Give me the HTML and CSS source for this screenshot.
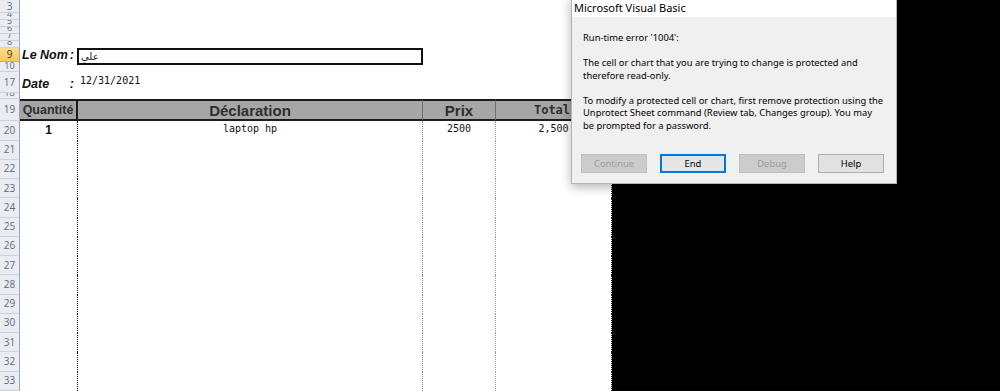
FILE: index.html
```html
<!DOCTYPE html>
<html lang="fr">
<head>
<meta charset="UTF-8">
<meta name="viewport" content="width=device-width, initial-scale=1.0">
<title>Facture - Feuil1</title>
<link rel="stylesheet" href="styles.css">
</head>
<body>
<div class="screen">
    <div class="sheet">
        <div class="row r3"><div class="rh">3</div></div>
        <div class="row r-tiny"><div class="rh">4</div></div>
        <div class="row r-tiny"><div class="rh">5</div></div>
        <div class="row r-tiny"><div class="rh">6</div></div>
        <div class="row r-tiny"><div class="rh">7</div></div>
        <div class="row r-tiny"><div class="rh">8</div></div>

        <div class="row r-nom">
            <div class="rh sel">9</div>
            <div class="cell c-a label"><span>Le Nom</span><span>:</span></div>
            <div class="cell c-b"><div class="name-box">علي</div></div>
        </div>
        <div class="row r10"><div class="rh">10</div></div>

        <div class="row r-date">
            <div class="rh">17</div>
            <div class="cell c-a label"><span>Date</span><span>:</span></div>
            <div class="cell c-b date">12/31/2021</div>
        </div>
        <div class="row r18"><div class="rh">18</div></div>

        <div class="row head">
            <div class="rh">19</div>
            <div class="cell c-a">Quantité</div>
            <div class="cell c-b">Déclaration</div>
            <div class="cell c-c">Prix</div>
            <div class="cell c-d total">Total</div>
        </div>

        <div class="row item first">
            <div class="rh">20</div>
            <div class="cell c-a qty">1</div>
            <div class="cell c-b mono">laptop hp</div>
            <div class="cell c-c mono">2500</div>
            <div class="cell c-d mono">2,500</div>
        </div>
        <div class="row item"><div class="rh">21</div><div class="cell c-a"></div><div class="cell c-b"></div><div class="cell c-c"></div><div class="cell c-d"></div></div>
        <div class="row item"><div class="rh">22</div><div class="cell c-a"></div><div class="cell c-b"></div><div class="cell c-c"></div><div class="cell c-d"></div></div>
        <div class="row item"><div class="rh">23</div><div class="cell c-a"></div><div class="cell c-b"></div><div class="cell c-c"></div><div class="cell c-d"></div></div>
        <div class="row item"><div class="rh">24</div><div class="cell c-a"></div><div class="cell c-b"></div><div class="cell c-c"></div><div class="cell c-d"></div></div>
        <div class="row item"><div class="rh">25</div><div class="cell c-a"></div><div class="cell c-b"></div><div class="cell c-c"></div><div class="cell c-d"></div></div>
        <div class="row item"><div class="rh">26</div><div class="cell c-a"></div><div class="cell c-b"></div><div class="cell c-c"></div><div class="cell c-d"></div></div>
        <div class="row item"><div class="rh">27</div><div class="cell c-a"></div><div class="cell c-b"></div><div class="cell c-c"></div><div class="cell c-d"></div></div>
        <div class="row item"><div class="rh">28</div><div class="cell c-a"></div><div class="cell c-b"></div><div class="cell c-c"></div><div class="cell c-d"></div></div>
        <div class="row item"><div class="rh">29</div><div class="cell c-a"></div><div class="cell c-b"></div><div class="cell c-c"></div><div class="cell c-d"></div></div>
        <div class="row item"><div class="rh">30</div><div class="cell c-a"></div><div class="cell c-b"></div><div class="cell c-c"></div><div class="cell c-d"></div></div>
        <div class="row item"><div class="rh">31</div><div class="cell c-a"></div><div class="cell c-b"></div><div class="cell c-c"></div><div class="cell c-d"></div></div>
        <div class="row item"><div class="rh">32</div><div class="cell c-a"></div><div class="cell c-b"></div><div class="cell c-c"></div><div class="cell c-d"></div></div>
        <div class="row item"><div class="rh">33</div><div class="cell c-a"></div><div class="cell c-b"></div><div class="cell c-c"></div><div class="cell c-d"></div></div>
    </div>
    <div class="void"></div>

    <div class="vb-dialog">
        <div class="vb-title">Microsoft Visual Basic</div>
        <div class="vb-body">
            <p>Run-time error '1004':</p>
            <p>The cell or chart that you are trying to change is protected and<br>therefore read-only.</p>
            <p>To modify a protected cell or chart, first remove protection using the<br>Unprotect Sheet command (Review tab, Changes group). You may<br>be prompted for a password.</p>
            <div class="vb-buttons">
                <button class="vb-btn" disabled>Continue</button>
                <button class="vb-btn default">End</button>
                <button class="vb-btn" disabled>Debug</button>
                <button class="vb-btn">Help</button>
            </div>
        </div>
    </div>
</div>
</body>
</html>
```

FILE: styles.css
```css
:root{
    --rh-bg:#e9edf1;
    --rh-line:#cdd2d9;
    --rh-text:#5f6b78;
    --head-bg:#a6a6a6;
    --dlg-bg:#f0f0f0;
}
body{
    margin:0;
    background:#fff;
    font-family:"Liberation Sans", Arial, sans-serif;
}
.screen{
    position:relative;
    display:flex;
    width:1000px;
    height:391px;
    overflow:hidden;
}
.sheet{
    display:flex;
    flex-direction:column;
    width:612px;
    flex:none;
}
.void{
    flex:1;
    background:#000;
}

/* rows */
.row{
    display:flex;
    flex:none;
    box-sizing:border-box;
}
.r3{height:13px;}
.r-tiny{height:7px;}
.r-nom{height:14px;}
.r10{height:10px;}
.r-date{height:21px;}
.r18{height:6px;}
.head{height:22px;}
.item{height:19.25px;}
.item.first{height:19.5px;}

.rh{
    width:20px;
    flex:none;
    box-sizing:border-box;
    display:flex;
    align-items:center;
    justify-content:center;
    overflow:hidden;
    background:var(--rh-bg);
    border-right:1px solid #9da6b0;
    border-bottom:1px solid var(--rh-line);
    color:var(--rh-text);
    font-family:"Open Sans", sans-serif;
    font-size:10px;
    line-height:11px;
}
.r-tiny .rh,
.r10 .rh,
.r18 .rh{
    align-items:flex-end;
    font-size:9px;
}
.rh.sel{
    background:linear-gradient(#f9dd8c,#f4c85e);
    border-bottom-color:#d7ab4c;
    color:#3a3a3a;
}

/* cells */
.cell{
    box-sizing:border-box;
    flex:none;
    display:flex;
    align-items:center;
    justify-content:center;
}
.c-a{width:58px;}
.c-b{width:345px;}
.c-c{width:73px;}
.c-d{width:116px;}

.label{
    justify-content:space-between;
    padding:0 4px 0 2px;
    font-weight:bold;
    font-style:italic;
    font-size:12.5px;
    color:#111;
}
.r-date .label{
    padding-top:2px;
}
.r-nom .c-b{
    align-items:flex-start;
    justify-content:flex-start;
}
.name-box{
    box-sizing:border-box;
    flex:none;
    width:346px;
    height:17px;
    margin-left:-1px;
    border:2px solid #111;
    padding:0 2px;
    font-family:"DejaVu Sans", sans-serif;
    font-size:10px;
    line-height:13px;
    color:#222;
}
.date{
    justify-content:flex-start;
    align-items:flex-start;
    padding:3px 0 0 2px;
    font-family:"DejaVu Sans Mono", monospace;
    font-size:10px;
    color:#111;
}

/* table header */
.head .cell{
    background:var(--head-bg);
    border-top:2px solid #1c1c1c;
    border-bottom:2px solid #1c1c1c;
    border-right:1px solid #6f6f6f;
    font-weight:bold;
    font-size:15px;
    color:#2e2e2e;
}
.head .c-a{
    border-right:2px solid #1c1c1c;
    font-size:12.5px;
}
.head .c-d{
    border-right:none;
    padding-right:4px;
}
.head .total{
    font-family:"DejaVu Sans Mono", monospace;
    font-size:12px;
}

/* table body */
.item .cell{
    border-right:1px dotted #222;
    align-items:flex-start;
    padding-top:2px;
}
.item .c-c{
    border-right-color:#9a9a9a;
}
.item .c-a{
    border-right-color:#111;
}
.item .c-b{
    border-right-color:#8a8a8a;
}
.mono{
    font-family:"DejaVu Sans Mono", monospace;
    font-size:10px;
    color:#111;
}
.qty{
    font-weight:bold;
    font-size:12px;
    color:#111;
}

/* VBA error dialog */
.vb-dialog{
    position:absolute;
    left:571px;
    top:-4px;
    width:326px;
    height:188px;
    box-sizing:border-box;
    border:1px solid #b5b5b5;
    background:var(--dlg-bg);
    box-shadow:0 3px 10px rgba(0,0,0,.3);
    font-family:"Noto Sans", sans-serif;
    color:#000;
}
.vb-title{
    height:20px;
    display:flex;
    align-items:center;
    padding:0 0 0 2px;
    box-sizing:border-box;
    background:#fff;
    font-size:11px;
}
.vb-body{
    padding:15px 8px 0 11px;
    font-size:9.4px;
    line-height:12.5px;
}
.vb-body p{
    margin:0 0 12.5px;
    white-space:nowrap;
}
.vb-body p:last-of-type{
    margin-bottom:0;
}
.vb-buttons{
    display:flex;
    gap:13px;
    margin:22px 0 0 -2px;
}
.vb-btn{
    width:66px;
    height:19px;
    box-sizing:border-box;
    padding:0;
    border:1px solid #adadad;
    background:#e1e1e1;
    font-family:inherit;
    font-size:9.4px;
    color:#000;
}
.vb-btn:disabled{
    border-color:#bfbfbf;
    background:#cccccc;
    color:#9c9c9c;
}
.vb-btn.default{
    border:2px solid #0078d7;
    background:#e5e5e5;
}
```
